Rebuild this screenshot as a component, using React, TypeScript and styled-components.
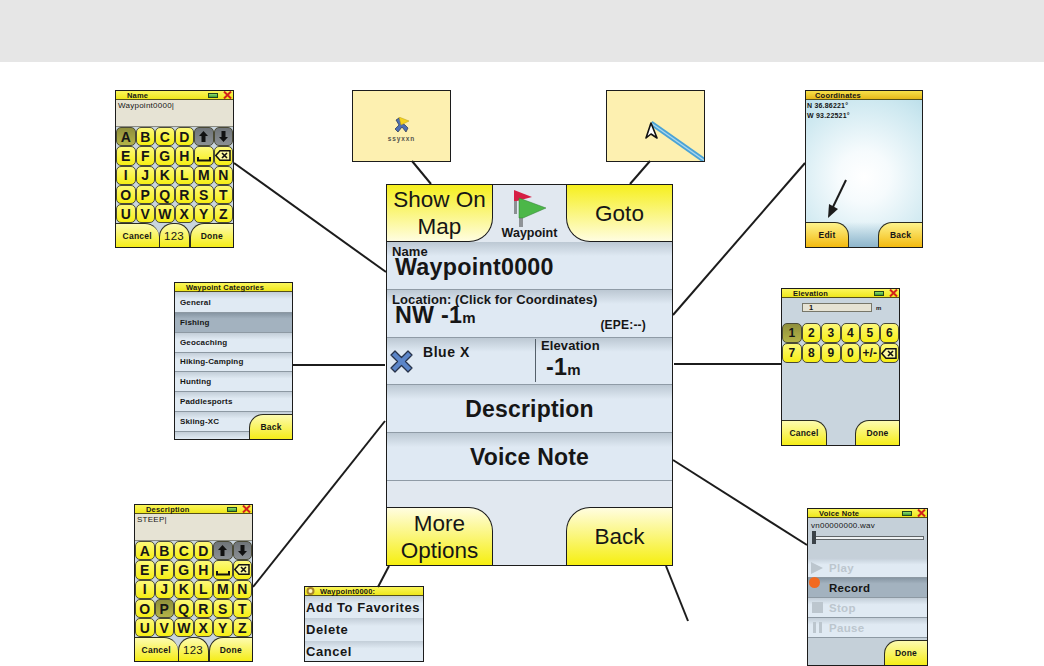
import styled, { createGlobalStyle } from 'styled-components';

const GlobalStyle = createGlobalStyle`
  html, body {
    margin: 0;
    padding: 0;
    background: #fff;
    font-family: "Liberation Sans", Arial, sans-serif;
    color: #161616;
  }
`;

const Page = styled.div`
  width: 1044px;
  height: 666px;
  overflow: hidden;
`;
const Band = styled.div`
  height: 62px;
  background: #e6e6e6;
`;
const Canvas = styled.div`
  position: relative;
  height: 604px;
`;
const Connectors = styled.svg`
  position: absolute;
  left: 0;
  top: 0;
`;

// Screens sit on a free canvas, the place is the content of the diagram
const Screen = styled.div<{ $x: number; $y: number; $w: number; $h: number; $bg?: string }>`
  position: absolute;
  left: ${(p) => p.$x}px;
  top: ${(p) => p.$y - 62}px;
  width: ${(p) => p.$w}px;
  height: ${(p) => p.$h}px;
  box-sizing: border-box;
  border: 1px solid #1c1c1c;
  background: ${(p) => p.$bg || '#c9d5de'};
  display: flex;
  flex-direction: column;
  overflow: hidden;
`;
const TitleBar = styled.div<{ $gold?: boolean; $pad?: number }>`
  flex: none;
  height: 8px;
  display: flex;
  align-items: center;
  gap: 5px;
  padding: 0 1px 0 ${(p) => p.$pad ?? 11}px;
  background: ${(p) =>
    p.$gold ? 'linear-gradient(#f7e04a, #e5b81a)' : 'linear-gradient(#fbf65a, #efe71c)'};
  border-bottom: 1px solid #55501a;
  font-size: 7.5px;
  font-weight: bold;
  letter-spacing: 0.2px;
  white-space: nowrap;
`;
const TitleText = styled.span`
  flex: 1;
`;
const Battery = styled.span`
  width: 10px;
  height: 5px;
  box-sizing: border-box;
  border: 1px solid #20441c;
  background: linear-gradient(#8fdc6a, #3f9f35);
`;
const EntryBox = styled.div`
  flex: none;
  box-sizing: border-box;
  height: 27px;
  padding: 1px 2px;
  background: #e6e3d4;
  border-bottom: 1px solid #8a8a80;
  font-size: 8px;
  letter-spacing: 0.25px;
`;
const KeyGrid = styled.div`
  flex: none;
  display: grid;
  grid-template-columns: repeat(6, 1fr);
  grid-auto-rows: 19.3px;
`;
const Key = styled.div<{ $tone?: 'press' | 'dark' }>`
  box-sizing: border-box;
  display: flex;
  align-items: center;
  justify-content: center;
  border: 1px solid #4a4a36;
  border-radius: 5px;
  font-size: 14px;
  font-weight: bold;
  background: ${(p) =>
    p.$tone === 'press'
      ? 'linear-gradient(#8f8f3c, #b4b347)'
      : p.$tone === 'dark'
      ? 'linear-gradient(#6f7478, #8b9094)'
      : 'linear-gradient(#fdf97a, #f6ee14)'};
`;
const NumKey = styled(Key)`
  font-size: 12px;
  height: 20px;
`;
const TabRow = styled.div`
  flex: none;
  margin-top: auto;
  height: 24px;
  display: flex;
`;
const Tab = styled.div<{ $shape: 'left' | 'mid' | 'right'; $width?: number }>`
  box-sizing: border-box;
  flex: ${(p) => (p.$width ? `0 0 ${p.$width}px` : '1')};
  display: flex;
  align-items: center;
  justify-content: center;
  border-top: 1px solid #2c2c20;
  border-left: ${(p) => (p.$shape === 'left' ? 'none' : '1px solid #2c2c20')};
  border-right: ${(p) => (p.$shape === 'mid' ? '1px solid #2c2c20' : 'none')};
  border-top-left-radius: ${(p) => (p.$shape === 'left' ? '0' : '14px')};
  border-top-right-radius: ${(p) => (p.$shape === 'right' ? '0' : '14px')};
  background: linear-gradient(#fdfbb0, #f5ed18);
  font-size: ${(p) => (p.$shape === 'mid' ? '11.5px' : '8.5px')};
  font-weight: ${(p) => (p.$shape === 'mid' ? 'normal' : 'bold')};
  letter-spacing: 0.25px;
`;
const FootRow = styled.div`
  flex: none;
  margin-top: auto;
  height: 25px;
  display: flex;
  justify-content: space-between;
`;
const FootButton = styled.div<{ $side: 'left' | 'right'; $width: number; $gold?: boolean }>`
  box-sizing: border-box;
  width: ${(p) => p.$width}px;
  display: flex;
  align-items: center;
  justify-content: center;
  border-top: 1px solid #2c2c20;
  ${(p) => (p.$side === 'left' ? 'border-right' : 'border-left')}: 1px solid #2c2c20;
  ${(p) => (p.$side === 'left' ? 'border-top-right-radius' : 'border-top-left-radius')}: 14px;
  background: ${(p) =>
    p.$gold ? 'linear-gradient(#fdf38c, #f3b90e)' : 'linear-gradient(#fdfbb0, #f5ed18)'};
  font-size: 8.5px;
  font-weight: bold;
  letter-spacing: 0.2px;
`;
const FloatingBack = styled(FootButton)`
  position: absolute;
  right: 0;
  bottom: 0;
  height: 25px;
`;
const ListRow = styled.div<{ $on?: boolean; $h?: number }>`
  flex: none;
  box-sizing: border-box;
  height: ${(p) => p.$h || 20}px;
  display: flex;
  align-items: center;
  padding-left: 5px;
  border-bottom: 1px solid #8d99a3;
  background: ${(p) =>
    p.$on ? 'linear-gradient(#8796a3, #a3b2bf 30%)' : 'linear-gradient(#c3ced8, #e0eaf3 35%)'};
  font-size: 8px;
  font-weight: bold;
  letter-spacing: 0.15px;
`;
const MenuRow = styled(ListRow)`
  height: 22.4px;
  padding-left: 1px;
  font-size: 13px;
  letter-spacing: 0.55px;
  border-bottom: none;
`;
const CoordText = styled.div`
  padding: 1px 1px 0;
  font-size: 7px;
  font-weight: bold;
  line-height: 9.5px;
  letter-spacing: 0.2px;
`;
const ValueRow = styled.div`
  display: flex;
  align-items: center;
  gap: 4px;
  padding: 5px 0 11px 20px;
  font-size: 6px;
  font-weight: bold;
`;
const ValueBox = styled.div`
  box-sizing: border-box;
  width: 70px;
  height: 9px;
  padding: 0 0 0 6px;
  background: #e6e3d4;
  border: 1px solid #77776a;
  font-size: 7.5px;
  line-height: 7px;
`;
const NumGrid = styled.div`
  display: grid;
  grid-template-columns: repeat(6, 1fr);
`;
const VoiceTop = styled.div`
  flex: none;
  height: 40px;
  box-sizing: border-box;
  padding: 3px 3px 0;
  font-size: 8px;
  letter-spacing: 0.25px;
`;
const Slider = styled.div`
  position: relative;
  margin: 6px 0 0 3px;
  height: 2px;
  background: #eef1f3;
  border: 1px solid #5f6468;
`;
const Thumb = styled.span`
  position: absolute;
  left: -3px;
  top: -6px;
  width: 4px;
  height: 13px;
  background: #3b4248;
`;
const VoiceRow = styled(ListRow)<{ $off?: boolean }>`
  position: relative;
  gap: 6px;
  height: 20px;
  padding-left: 3px;
  font-size: 11.5px;
  letter-spacing: 0.3px;
  color: ${(p) => (p.$off ? '#bcc6ce' : '#161616')};
`;
const RecordDot = styled.span`
  position: absolute;
  left: 1px;
  top: -1px;
  width: 11px;
  height: 11px;
  border-radius: 50%;
  background: #f26a21;
`;
const VoiceIcon = styled.span`
  width: 12px;
  display: flex;
  justify-content: center;
`;
const MapBox = styled(Screen)`
  background: #fdf0b0;
  display: block;
`;
const MapLabel = styled.div`
  margin: 1px 0 0;
  text-align: center;
  font-size: 6.5px;
  line-height: 8px;
  font-weight: bold;
  color: #55554e;
  letter-spacing: 0.9px;
`;
const MapIconWrap = styled.div`
  display: flex;
  justify-content: center;
  padding-top: 26px;
`;

// Main screen
const Device = styled(Screen)`
  border-width: 1.5px;
  background: #e1e8f0;
`;
const DeviceTop = styled.div`
  flex: none;
  height: 57px;
  display: flex;
`;
const DeviceBottom = styled.div`
  flex: none;
  margin-top: auto;
  height: 58px;
  display: flex;
  justify-content: space-between;
`;
const BigButton = styled.div<{ $corner: 'br' | 'bl' | 'tr' | 'tl' }>`
  box-sizing: border-box;
  flex: none;
  width: 106px;
  display: flex;
  align-items: center;
  justify-content: center;
  text-align: center;
  font-size: 22.5px;
  line-height: 27px;
  border: 0 solid #1c1c1c;
  ${(p) => (p.$corner[0] === 'b' ? 'border-bottom-width' : 'border-top-width')}: 1.5px;
  ${(p) => (p.$corner[1] === 'r' ? 'border-right-width' : 'border-left-width')}: 1.5px;
  ${(p) =>
    `border-${p.$corner[0] === 'b' ? 'bottom' : 'top'}-${
      p.$corner[1] === 'r' ? 'right' : 'left'
    }-radius: 24px;`}
  background: ${(p) =>
    p.$corner[0] === 'b'
      ? 'linear-gradient(#f6ef1e, #fffde0)'
      : 'linear-gradient(#fffde0, #f6ef10)'};
`;
const FlagCell = styled.div`
  flex: 1;
  display: flex;
  flex-direction: column;
  align-items: center;
  font-size: 12.5px;
  font-weight: bold;
  padding-top: 3px;
`;
const FlagLabel = styled.span`
  margin-top: -2px;
  line-height: 14px;
`;
const Row = styled.div<{ $center?: boolean }>`
  position: relative;
  flex: none;
  box-sizing: border-box;
  height: 47.8px;
  border-bottom: 1px solid #8f9ba6;
  background: linear-gradient(#bcc8d3, #dfe9f3 30%);
  display: flex;
  flex-direction: ${(p) => (p.$center ? 'row' : 'column')};
  ${(p) => p.$center && 'align-items: center; justify-content: center; padding-top: 2px;'}
  font-weight: bold;
`;
const RowLabel = styled.div`
  padding: 5px 0 0 5px;
  font-size: 13px;
  line-height: 10px;
  letter-spacing: 0.1px;
`;
const RowValue = styled.div`
  padding-left: 8px;
  font-size: 23.3px;
  line-height: 20px;
  letter-spacing: 0.25px;
`;
const Unit = styled.span`
  font-size: 15px;
`;
const Epe = styled.span`
  position: absolute;
  right: 26px;
  bottom: 5px;
  font-size: 12px;
  letter-spacing: 0.2px;
`;
const RowAction = styled.span`
  font-size: 23px;
  letter-spacing: 0.2px;
`;
const IconRow = styled(Row)`
  flex-direction: row;
`;
const IconCell = styled.div`
  flex: 0 0 148px;
  display: flex;
  align-items: flex-start;
  gap: 8px;
  padding: 6px 0 0 1px;
  box-sizing: border-box;
  font-size: 14px;
  letter-spacing: 0.55px;
`;
const CrossIcon = styled.svg`
  margin-top: 4px;
`;
const ElevationCell = styled.div`
  flex: 1;
  margin: 1px 0 2px;
  border-left: 1.5px solid #55606a;
`;
const ElevationLabel = styled(RowLabel)`
  padding-top: 2px;
`;
const ElevationValue = styled(RowValue)`
  padding: 6px 0 0 10px;
`;

const RedX = () => (
  <svg width="9" height="8" viewBox="0 0 9 8">
    <path d="M1 0.5 8 7.5M8 0.5 1 7.5" stroke="#d3211b" strokeWidth="2" />
  </svg>
);

const Title = ({ text }: { text: string }) => (
  <TitleBar>
    <TitleText>{text}</TitleText>
    <Battery />
    <RedX />
  </TitleBar>
);

const ArrowKey = ({ up }: { up?: boolean }) => (
  <svg width="9" height="11" viewBox="0 0 9 11">
    <path d={up ? 'M4.5 0 9 5H6.5V11H2.5V5H0Z' : 'M4.5 11 9 6H6.5V0H2.5V6H0Z'} fill="#111" />
  </svg>
);

const Backspace = () => (
  <svg width="16" height="11" viewBox="0 0 16 11">
    <path d="M5 .8H15V10.2H5L.8 5.5Z" fill="#fdf9a0" stroke="#111" strokeWidth="1.5" />
    <path d="M7 3 12 8M12 3 7 8" stroke="#111" strokeWidth="1.6" />
  </svg>
);

const SpaceBar = () => (
  <svg width="14" height="14" viewBox="0 0 14 14">
    <path d="M1 8V11.5H13V8" fill="none" stroke="#111" strokeWidth="2" />
  </svg>
);

const Flags = () => (
  <svg width="34" height="40" viewBox="0 0 34 40">
    <rect x="1" y="10" width="3" height="16" fill="#8b8f93" />
    <path d="M1 2 19 9 4 13H1Z" fill="#d61f45" />
    <rect x="6" y="24" width="4" height="15" fill="#8f9397" />
    <path d="M6 10 33 20 10 30H6Z" fill="#4cb748" stroke="#2f7d32" strokeWidth=".5" />
  </svg>
);

const BlueCross = () => (
  <CrossIcon width="27" height="27" viewBox="0 0 27 27">
    <path
      d="M3 7 7 3 13.5 9.5 20 3 24 7 17.5 13.5 24 20 20 24 13.5 17.5 7 24 3 20 9.5 13.5Z"
      fill="#5b85c8"
      stroke="#26324a"
      strokeWidth="1.3"
      strokeLinejoin="round"
    />
  </CrossIcon>
);

const KeyboardScreen = ({
  x,
  y,
  title,
  entry,
  pressed,
}: {
  x: number;
  y: number;
  title: string;
  entry: string;
  pressed: string;
}) => {
  const letters = ['A', 'B', 'C', 'D', '^', 'v', 'E', 'F', 'G', 'H', '_', '<', 'I', 'J', 'K', 'L', 'M', 'N', 'O', 'P', 'Q', 'R', 'S', 'T', 'U', 'V', 'W', 'X', 'Y', 'Z'];
  return (
    <Screen $x={x} $y={y} $w={119} $h={158}>
      <Title text={title} />
      <EntryBox>{entry}|</EntryBox>
      <KeyGrid>
        {letters.map((k) => {
          if (k === '^') return <Key key={k} $tone="dark"><ArrowKey up /></Key>;
          if (k === 'v') return <Key key={k} $tone="dark"><ArrowKey /></Key>;
          if (k === '_') return <Key key={k}><SpaceBar /></Key>;
          if (k === '<') return <Key key={k}><Backspace /></Key>;
          return <Key key={k} $tone={k === pressed ? 'press' : undefined}>{k}</Key>;
        })}
      </KeyGrid>
      <TabRow>
        <Tab $shape="left">Cancel</Tab>
        <Tab $shape="mid" $width={31}>123</Tab>
        <Tab $shape="right">Done</Tab>
      </TabRow>
    </Screen>
  );
};

const lines = [
  [234, 163, 386, 272],
  [293, 365, 385, 365],
  [253, 587, 385, 421],
  [378, 587, 389, 566],
  [412, 161, 431, 184],
  [650, 161, 630, 184],
  [805, 163, 673, 315],
  [674, 364, 781, 364],
  [673, 460, 807, 545],
  [666, 566, 688, 621],
];

const categories = ['General', 'Fishing', 'Geocaching', 'Hiking-Camping', 'Hunting', 'Paddlesports', 'Skiing-XC', 'Snowmobile'];

const App = () => {
  return (
    <Page>
      <GlobalStyle />
      <Band />
      <Canvas>
        <KeyboardScreen x={115} y={90} title="Name" entry="Waypoint0000" pressed="A" />
        <KeyboardScreen x={134} y={504} title="Description" entry="STEEP" pressed="P" />

        <Screen $x={174} $y={282} $w={119} $h={158} $bg="#dfe9f3">
          <TitleBar>
            <TitleText>Waypoint Categories</TitleText>
          </TitleBar>
          {categories.map((c, i) => (
            <ListRow key={c} $on={c === 'Fishing'} $h={i === 0 ? 21 : 19.8}>
              {c}
            </ListRow>
          ))}
          <FloatingBack $side="right" $width={43}>Back</FloatingBack>
        </Screen>

        <Screen $x={304} $y={586} $w={120} $h={76} $bg="#dfe9f3">
          <TitleBar $pad={1}>
            <svg width="9" height="8" viewBox="0 0 9 8">
              <circle cx="4.5" cy="4" r="3" fill="#fff7c0" stroke="#a8832a" strokeWidth="2" />
            </svg>
            <TitleText>Waypoint0000:</TitleText>
          </TitleBar>
          <MenuRow>Add To Favorites</MenuRow>
          <MenuRow>Delete</MenuRow>
          <MenuRow>Cancel</MenuRow>
        </Screen>

        <MapBox $x={352} $y={90} $w={99} $h={72}>
          <MapIconWrap>
            <svg width="16" height="17" viewBox="0 0 16 17">
              <path d="M2 3 5 1 8 6 11 8 14 11 12 15 8 10 4 15 1 12 5 8Z" fill="#4d6fb3" stroke="#25324f" strokeWidth=".7" />
              <path d="M5 0 15 4 7 8Z" fill="#f4d31f" stroke="#b59a14" strokeWidth=".5" />
            </svg>
          </MapIconWrap>
          <MapLabel>ssyxxn</MapLabel>
        </MapBox>

        <MapBox $x={606} $y={90} $w={99} $h={72}>
          <svg width="99" height="70" viewBox="0 0 99 70">
            <path d="M44 32 98 70" stroke="#4aa3d6" strokeWidth="5" />
            <path d="M44 32 98 70" stroke="#a9d7ee" strokeWidth="1.4" />
            <path d="M44 32 39 47 44 43 50 47Z" fill="#fff" stroke="#111" strokeWidth="1.6" strokeLinejoin="round" />
          </svg>
        </MapBox>

        <Screen
          $x={805}
          $y={90}
          $w={118}
          $h={158}
          $bg="linear-gradient(transparent 84%, #8fb6cc 100%), radial-gradient(circle at 50% 55%, #fff 0, #f6fbfd 25%, #cde8f0 75%, #b6dce8 100%)"
        >
          <TitleBar $gold $pad={9}>
            <TitleText>Coordinates</TitleText>
          </TitleBar>
          <CoordText>
            N 36.86221°
            <br />
            W 93.22521°
          </CoordText>
          <FootRow>
            <FootButton $side="left" $width={43} $gold>Edit</FootButton>
            <FootButton $side="right" $width={44} $gold>Back</FootButton>
          </FootRow>
        </Screen>

        <Screen $x={781} $y={288} $w={119} $h={158}>
          <Title text="Elevation" />
          <ValueRow>
            <ValueBox>1</ValueBox>m
          </ValueRow>
          <NumGrid>
            {['1', '2', '3', '4', '5', '6', '7', '8', '9', '0', '+/-'].map((n) => (
              <NumKey key={n} $tone={n === '1' ? 'press' : undefined}>{n}</NumKey>
            ))}
            <NumKey><Backspace /></NumKey>
          </NumGrid>
          <FootRow>
            <FootButton $side="left" $width={45}>Cancel</FootButton>
            <FootButton $side="right" $width={44}>Done</FootButton>
          </FootRow>
        </Screen>

        <Screen $x={807} $y={508} $w={121} $h={158} $bg="#c5d0d9">
          <Title text="Voice Note" />
          <VoiceTop>
            vn00000000.wav
            <Slider>
              <Thumb />
            </Slider>
          </VoiceTop>
          <VoiceRow $off>
            <VoiceIcon>
              <svg width="12" height="12" viewBox="0 0 12 12"><path d="M0 0 12 6 0 12Z" fill="#bcc6ce" /></svg>
            </VoiceIcon>
            Play
          </VoiceRow>
          <VoiceRow $on>
            <RecordDot />
            <VoiceIcon />
            Record
          </VoiceRow>
          <VoiceRow $off>
            <VoiceIcon>
              <svg width="11" height="11" viewBox="0 0 11 11"><rect width="11" height="11" fill="#bcc6ce" /></svg>
            </VoiceIcon>
            Stop
          </VoiceRow>
          <VoiceRow $off>
            <VoiceIcon>
              <svg width="9" height="11" viewBox="0 0 9 11"><path d="M0 0H3V11H0ZM6 0H9V11H6Z" fill="#bcc6ce" /></svg>
            </VoiceIcon>
            Pause
          </VoiceRow>
          <FloatingBack $side="right" $width={43}>Done</FloatingBack>
        </Screen>

        <Device $x={386} $y={184} $w={287} $h={382}>
          <DeviceTop>
            <BigButton $corner="br">Show On<br />Map</BigButton>
            <FlagCell>
              <Flags />
              <FlagLabel>Waypoint</FlagLabel>
            </FlagCell>
            <BigButton $corner="bl">Goto</BigButton>
          </DeviceTop>
          <Row>
            <RowLabel>Name</RowLabel>
            <RowValue>Waypoint0000</RowValue>
          </Row>
          <Row>
            <RowLabel>Location: (Click for Coordinates)</RowLabel>
            <RowValue>NW -1<Unit>m</Unit></RowValue>
            <Epe>(EPE:--)</Epe>
          </Row>
          <IconRow>
            <IconCell>
              <BlueCross />
              Blue X
            </IconCell>
            <ElevationCell>
              <ElevationLabel>Elevation</ElevationLabel>
              <ElevationValue>-1<Unit>m</Unit></ElevationValue>
            </ElevationCell>
          </IconRow>
          <Row $center><RowAction>Description</RowAction></Row>
          <Row $center><RowAction>Voice Note</RowAction></Row>
          <DeviceBottom>
            <BigButton $corner="tr">More<br />Options</BigButton>
            <BigButton $corner="tl">Back</BigButton>
          </DeviceBottom>
        </Device>

        <Connectors width="1044" height="604" viewBox="0 62 1044 604">
          {lines.map(([x1, y1, x2, y2]) => (
            <line key={`${x1}-${y1}`} x1={x1} y1={y1} x2={x2} y2={y2} stroke="#1c1c1c" strokeWidth="2" />
          ))}
          <path d="M846 180 832 209" stroke="#1c1c1c" strokeWidth="2" />
          <path d="M828 218 829 204 838 209Z" fill="#1c1c1c" />
        </Connectors>
      </Canvas>
    </Page>
  );
};

export default App;
